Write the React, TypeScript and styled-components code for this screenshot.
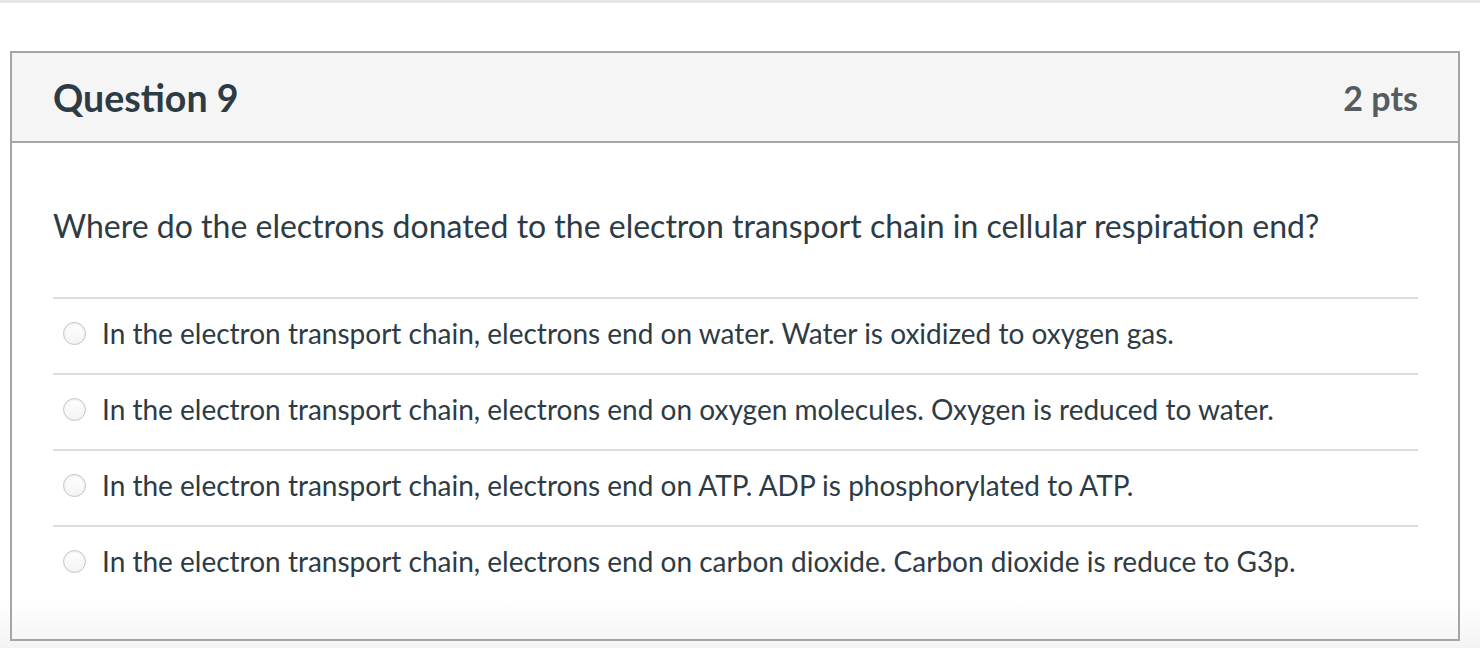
import styled, { createGlobalStyle } from 'styled-components';

const GlobalStyle = createGlobalStyle`
  html, body {
    margin: 0;
    padding: 0;
  }
  body {
    font-family: Lato, "Liberation Sans", sans-serif;
    color: #2d3b45;
  }
`;

const Page = styled.div`
  min-height: 648px;
  box-sizing: border-box;
  border-top: 3px solid #e6e6e6;
  padding: 48px 20px 6px 10px;
  background: linear-gradient(to bottom, #ffffff 0, #ffffff 596px, #f3f3f3 648px);
`;

const Card = styled.div`
  border: 2px solid #a5a5a5;
`;

const Header = styled.div`
  display: flex;
  align-items: center;
  justify-content: space-between;
  height: 88px;
  padding: 0 40px 0 41px;
  background: #f5f5f5;
  border-bottom: 2px solid #a5a5a5;
`;

const Title = styled.h2`
  margin: 0;
  font-size: 37.5px;
  font-weight: 700;
  color: #2d3b45;
`;

const Points = styled.div`
  font-size: 34px;
  font-weight: 700;
  color: #555c61;
`;

const Body = styled.div`
  padding: 64px 40px 38px 41px;
`;

const Prompt = styled.p`
  margin: 0 0 52px;
  font-size: 32px;
  line-height: 38px;
`;

const Answers = styled.div`
  display: flex;
  flex-direction: column;
`;

const Answer = styled.label`
  display: flex;
  align-items: center;
  gap: 16px;
  height: 68px;
  padding-bottom: 6px;
  padding-left: 10px;
  border-top: 2px solid #dedede;
  font-size: 28px;
  cursor: pointer;
`;

const Radio = styled.span`
  width: 21px;
  height: 21px;
  border-radius: 50%;
  border: 1px solid #c4c4c4;
  background: linear-gradient(to bottom, #ffffff, #f3f3f3);
  box-shadow: inset 0 1px 2px rgba(0, 0, 0, 0.08);
  flex-shrink: 0;
`;

const answers = [
  'In the electron transport chain, electrons end on water. Water is oxidized to oxygen gas.',
  'In the electron transport chain, electrons end on oxygen molecules. Oxygen is reduced to water.',
  'In the electron transport chain, electrons end on ATP. ADP is phosphorylated to ATP.',
  'In the electron transport chain, electrons end on carbon dioxide. Carbon dioxide is reduce to G3p.',
];

export default function App() {
  return (
    <>
      <GlobalStyle />
      <Page>
        <Card>
          <Header>
            <Title>Question 9</Title>
            <Points>2 pts</Points>
          </Header>
          <Body>
            <Prompt>
              Where do the electrons donated to the electron transport chain in cellular respiration end?
            </Prompt>
            <Answers>
              {answers.map((a) => (
                <Answer key={a}>
                  <Radio />
                  {a}
                </Answer>
              ))}
            </Answers>
          </Body>
        </Card>
      </Page>
    </>
  );
}
